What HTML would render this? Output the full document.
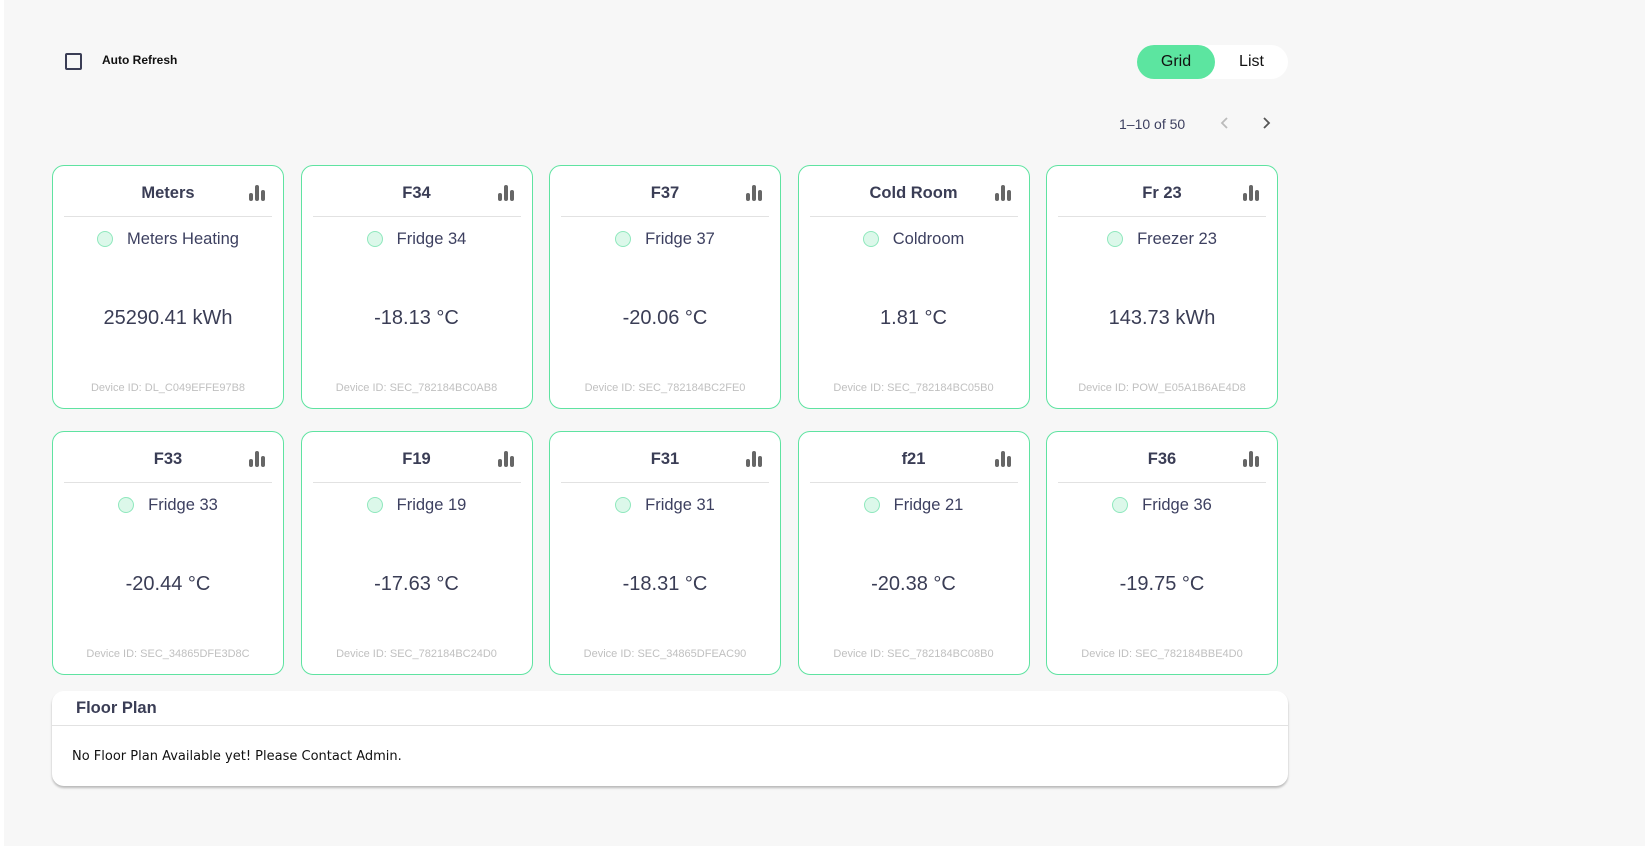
<!DOCTYPE html>
<html><head><meta charset="utf-8"><style>
*{box-sizing:border-box;margin:0;padding:0}
body{width:1645px;height:846px;background:#fff;font-family:"Liberation Sans",sans-serif;position:relative;overflow:hidden}
.bg{position:absolute;left:4px;top:0;right:0;bottom:0;background:#f7f7f7}
.cb{position:absolute;left:65px;top:53px;width:17px;height:17px;border:2px solid #3a3d55;border-radius:2px}
.ar{position:absolute;left:102px;top:53px;font-size:12px;font-weight:bold;color:#111}
.tg{position:absolute;left:1137px;top:45px;width:151px;height:34px;background:#fff;border-radius:17px}
.tg .g{position:absolute;left:0;top:0;width:78px;height:34px;background:#5ce5a0;border-radius:17px;text-align:center;line-height:34px;font-size:16px;color:#111}
.tg .l{position:absolute;left:78px;top:0;width:73px;text-align:center;line-height:34px;font-size:16px;color:#111}
.pg{position:absolute;left:1119px;top:116px;font-size:14px;color:#3d4060}
.arr{position:absolute;top:115px}
.card{position:absolute;width:232px;height:244px;background:#fff;border:1px solid #5fe3a1;border-radius:12px}
.t{position:absolute;top:18px;left:0;width:100%;text-align:center;font-size:16.5px;font-weight:bold;color:#3a3d55}
.ic{position:absolute;left:195px;top:19px}
.dv{position:absolute;left:11px;right:11px;top:50px;height:1px;background:#e2e2e2}
.st{position:absolute;top:63px;left:0;width:100%;text-align:center;font-size:16.5px;color:#3d4060;line-height:20px}
.st i{display:inline-block;width:16px;height:16px;border-radius:50%;background:#dcf8ea;border:1px solid #8fe8bd;vertical-align:-3px;margin-right:14px}
.v{position:absolute;top:141px;left:0;width:100%;text-align:center;font-size:20px;color:#3a3d55}
.d{position:absolute;top:216px;left:0;width:100%;text-align:center;font-size:11px;color:#c0c0c0}
.fp{position:absolute;left:52px;top:691px;width:1236px;height:95px;background:#fff;border-radius:12px;box-shadow:0 2px 2px rgba(0,0,0,.25)}
.fp .h{position:absolute;left:24px;top:8px;font-size:16.5px;font-weight:bold;color:#3a3d55}
.fp .ln{position:absolute;left:0;right:0;top:34px;height:1px;background:#e2e2e2}
.fp .x{position:absolute;left:20px;top:58px;color:#111;font-family:"DejaVu Sans","Liberation Sans",sans-serif;font-size:13px}
</style></head><body>
<div class="bg"></div>
<div class="cb"></div><div class="ar">Auto Refresh</div>
<div class="tg"><div class="g">Grid</div><div class="l">List</div></div>
<div class="pg">1–10 of 50</div>
<svg class="arr" style="left:1217px" width="16" height="16" viewBox="0 0 16 16"><path d="M10 3 L5 8 L10 13" stroke="#bbb" stroke-width="1.8" fill="none"/></svg>
<svg class="arr" style="left:1258px" width="16" height="16" viewBox="0 0 16 16"><path d="M6 3 L11 8 L6 13" stroke="#555" stroke-width="1.8" fill="none"/></svg>

<div class="card" style="left:52px;top:165px"><div class="t">Meters</div><svg class="ic" width="18" height="17"><rect x="1" y="8" width="4" height="8" rx="2" fill="#666"/><rect x="7" y="0" width="4" height="16" rx="2" fill="#666"/><rect x="13" y="5" width="4" height="11" rx="2" fill="#666"/></svg><div class="dv"></div><div class="st"><i></i>Meters Heating</div><div class="v">25290.41 kWh</div><div class="d">Device ID: DL_C049EFFE97B8</div></div>
<div class="card" style="left:300.5px;top:165px"><div class="t">F34</div><svg class="ic" width="18" height="17"><rect x="1" y="8" width="4" height="8" rx="2" fill="#666"/><rect x="7" y="0" width="4" height="16" rx="2" fill="#666"/><rect x="13" y="5" width="4" height="11" rx="2" fill="#666"/></svg><div class="dv"></div><div class="st"><i></i>Fridge 34</div><div class="v">-18.13 °C</div><div class="d">Device ID: SEC_782184BC0AB8</div></div>
<div class="card" style="left:549px;top:165px"><div class="t">F37</div><svg class="ic" width="18" height="17"><rect x="1" y="8" width="4" height="8" rx="2" fill="#666"/><rect x="7" y="0" width="4" height="16" rx="2" fill="#666"/><rect x="13" y="5" width="4" height="11" rx="2" fill="#666"/></svg><div class="dv"></div><div class="st"><i></i>Fridge 37</div><div class="v">-20.06 °C</div><div class="d">Device ID: SEC_782184BC2FE0</div></div>
<div class="card" style="left:797.5px;top:165px"><div class="t">Cold Room</div><svg class="ic" width="18" height="17"><rect x="1" y="8" width="4" height="8" rx="2" fill="#666"/><rect x="7" y="0" width="4" height="16" rx="2" fill="#666"/><rect x="13" y="5" width="4" height="11" rx="2" fill="#666"/></svg><div class="dv"></div><div class="st"><i></i>Coldroom</div><div class="v">1.81 °C</div><div class="d">Device ID: SEC_782184BC05B0</div></div>
<div class="card" style="left:1046px;top:165px"><div class="t">Fr 23</div><svg class="ic" width="18" height="17"><rect x="1" y="8" width="4" height="8" rx="2" fill="#666"/><rect x="7" y="0" width="4" height="16" rx="2" fill="#666"/><rect x="13" y="5" width="4" height="11" rx="2" fill="#666"/></svg><div class="dv"></div><div class="st"><i></i>Freezer 23</div><div class="v">143.73 kWh</div><div class="d">Device ID: POW_E05A1B6AE4D8</div></div>

<div class="card" style="left:52px;top:431px"><div class="t">F33</div><svg class="ic" width="18" height="17"><rect x="1" y="8" width="4" height="8" rx="2" fill="#666"/><rect x="7" y="0" width="4" height="16" rx="2" fill="#666"/><rect x="13" y="5" width="4" height="11" rx="2" fill="#666"/></svg><div class="dv"></div><div class="st"><i></i>Fridge 33</div><div class="v">-20.44 °C</div><div class="d">Device ID: SEC_34865DFE3D8C</div></div>
<div class="card" style="left:300.5px;top:431px"><div class="t">F19</div><svg class="ic" width="18" height="17"><rect x="1" y="8" width="4" height="8" rx="2" fill="#666"/><rect x="7" y="0" width="4" height="16" rx="2" fill="#666"/><rect x="13" y="5" width="4" height="11" rx="2" fill="#666"/></svg><div class="dv"></div><div class="st"><i></i>Fridge 19</div><div class="v">-17.63 °C</div><div class="d">Device ID: SEC_782184BC24D0</div></div>
<div class="card" style="left:549px;top:431px"><div class="t">F31</div><svg class="ic" width="18" height="17"><rect x="1" y="8" width="4" height="8" rx="2" fill="#666"/><rect x="7" y="0" width="4" height="16" rx="2" fill="#666"/><rect x="13" y="5" width="4" height="11" rx="2" fill="#666"/></svg><div class="dv"></div><div class="st"><i></i>Fridge 31</div><div class="v">-18.31 °C</div><div class="d">Device ID: SEC_34865DFEAC90</div></div>
<div class="card" style="left:797.5px;top:431px"><div class="t">f21</div><svg class="ic" width="18" height="17"><rect x="1" y="8" width="4" height="8" rx="2" fill="#666"/><rect x="7" y="0" width="4" height="16" rx="2" fill="#666"/><rect x="13" y="5" width="4" height="11" rx="2" fill="#666"/></svg><div class="dv"></div><div class="st"><i></i>Fridge 21</div><div class="v">-20.38 °C</div><div class="d">Device ID: SEC_782184BC08B0</div></div>
<div class="card" style="left:1046px;top:431px"><div class="t">F36</div><svg class="ic" width="18" height="17"><rect x="1" y="8" width="4" height="8" rx="2" fill="#666"/><rect x="7" y="0" width="4" height="16" rx="2" fill="#666"/><rect x="13" y="5" width="4" height="11" rx="2" fill="#666"/></svg><div class="dv"></div><div class="st"><i></i>Fridge 36</div><div class="v">-19.75 °C</div><div class="d">Device ID: SEC_782184BBE4D0</div></div>

<div class="fp"><div class="h">Floor Plan</div><div class="ln"></div><div class="x">No Floor Plan Available yet! Please Contact Admin.</div></div>
</body></html>
